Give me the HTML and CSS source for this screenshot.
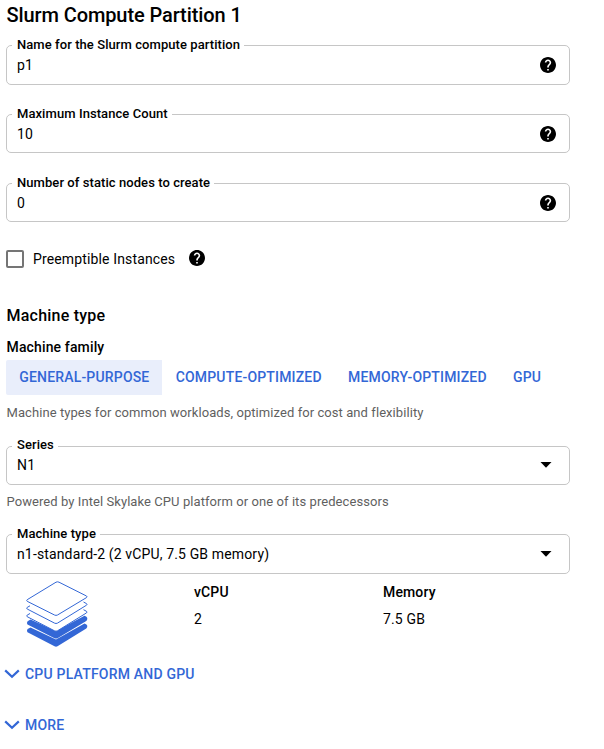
FILE: index.html
```html
<!DOCTYPE html>
<html lang="en">
<head>
<meta charset="utf-8">
<title>Slurm Compute Partition 1</title>
<link rel="stylesheet" href="styles.css">
</head>
<body>
<svg class="defs" width="0" height="0">
  <symbol id="help" viewBox="2 2 20 20"><path d="M12 2C6.48 2 2 6.48 2 12s4.48 10 10 10 10-4.48 10-10S17.52 2 12 2zm1 17h-2v-2h2v2zm2.07-7.75l-.9.92C13.45 12.9 13 13.5 13 15h-2v-.5c0-1.1.45-2.1 1.17-2.83l1.24-1.26c.37-.36.59-.86.59-1.41 0-1.1-.9-2-2-2s-2 .9-2 2H8c0-2.21 1.79-4 4-4s4 1.79 4 4c0 .88-.36 1.68-.93 2.25z"/></symbol>
  <symbol id="caret" viewBox="0 0 12 6"><path d="M.5 0h11L6 5.8z"/></symbol>
  <symbol id="chevron" viewBox="0 0 16 10"><path d="M1.2 1.4 8 7.8l6.8-6.4" fill="none" stroke="currentColor" stroke-width="2.2"/></symbol>
</svg>
<main class="form">
  <h1 class="title">Slurm Compute Partition 1</h1>

  <div class="field field-name tall">
    <label class="field-label">Name for the Slurm compute partition</label>
    <span class="value">p1</span><svg class="help"><use href="#help"/></svg>
  </div>
  <div class="field field-max">
    <label class="field-label">Maximum Instance Count</label>
    <span class="value">10</span><svg class="help"><use href="#help"/></svg>
  </div>
  <div class="field field-static">
    <label class="field-label">Number of static nodes to create</label>
    <span class="value">0</span><svg class="help"><use href="#help"/></svg>
  </div>

  <div class="check-row">
    <span class="checkbox"></span>
    <span class="check-label">Preemptible Instances</span>
    <svg class="help"><use href="#help"/></svg>
  </div>

  <h2 class="section">Machine type</h2>
  <h3 class="family">Machine family</h3>
  <nav class="tabs">
    <a class="tab active">GENERAL-PURPOSE</a>
    <a class="tab">COMPUTE-OPTIMIZED</a>
    <a class="tab">MEMORY-OPTIMIZED</a>
    <a class="tab">GPU</a>
  </nav>
  <p class="hint hint-family">Machine types for common workloads, optimized for cost and flexibility</p>

  <div class="field field-series">
    <label class="field-label">Series</label>
    <span class="value">N1</span><svg class="caret"><use href="#caret"/></svg>
  </div>
  <p class="hint hint-series">Powered by Intel Skylake CPU platform or one of its predecessors</p>

  <div class="field field-type tall">
    <label class="field-label">Machine type</label>
    <span class="value">n1-standard-2 (2 vCPU, 7.5 GB memory)</span><svg class="caret"><use href="#caret"/></svg>
  </div>

  <div class="specs">
    <svg class="stack" viewBox="0 0 64 68">
      <g class="solid">
        <path d="M5.500 47.500 2.600 49Q1.300 50.800 2.500 52.200L29.500 66.300Q31 67 32.500 66.300L61.300 48.600Q62.500 47.600 62.300 45.800 62 44.400 59.500 43.600L31 59.500z"/>
        <path d="M5.500 39.600 2.600 41.300Q1.300 43 2.500 44.500L29.500 58.200Q31 58.900 32.500 58.200L61.300 40.900Q62.500 39.900 62.300 38 62 36.600 59.500 35.700L31 51z"/>
      </g>
      <g class="outline">
        <path d="M5 33.500 2.200 35.100Q1.200 36 2.200 36.700L29.500 50.800Q31 51.600 32.500 50.800L61.500 32.900Q62.500 32 61.500 31.300L58.500 29.700"/>
        <path d="M5 25.800 2.200 27.400Q1.200 28.300 2.200 29L29.500 43.100Q31 43.900 32.500 43.100L61.500 25.200Q62.500 24.300 61.500 23.600L58.500 22"/>
        <path d="M31 2.200Q32.500 1.400 34 2.200L61.500 16Q62.500 16.800 61.500 17.600L32.500 35Q31 35.800 29.500 35L2.200 21.300Q1.200 20.500 2.200 19.700z"/>
      </g>
    </svg>
    <dl class="spec spec-cpu"><dt>vCPU</dt><dd>2</dd></dl>
    <dl class="spec"><dt>Memory</dt><dd>7.5 GB</dd></dl>
  </div>

  <a class="expander expander-cpu"><svg class="chevron"><use href="#chevron"/></svg>CPU PLATFORM AND GPU</a>
  <a class="expander"><svg class="chevron"><use href="#chevron"/></svg>MORE</a>
</main>
</body>
</html>
```
FILE: styles.css
```css
* { box-sizing: border-box; }
body {
  margin: 0;
  background: #fff;
  color: #000;
  font: 14px/20px Roboto, sans-serif;
  letter-spacing: 0.14px;
}
h1, h2, h3, p, dl, dd { margin: 0; }
.defs { display: block; }
.form {
  display: flow-root;
  width: 564px;
  margin-left: 6px;
}
.title {
  height: 30px;
  margin-bottom: 15px;
  padding-left: 0.5px;
  font-size: 20px;
  font-weight: 500;
  line-height: 30px;
  letter-spacing: -0.1px;
}
.field {
  position: relative;
  display: flex;
  align-items: center;
  justify-content: space-between;
  height: 39px;
  padding: 0 13px 0 10px;
  border: 1px solid #c6c6c6;
  border-radius: 5px;
}
.tall { height: 40px; }
.field-label {
  position: absolute;
  top: -9px;
  left: 5px;
  padding: 0 4px 0 5px;
  background: #fff;
  font-size: 13px;
  font-weight: 500;
  line-height: 16px;
  letter-spacing: 0.07px;
  white-space: nowrap;
}
.help { width: 16px; height: 16px; }
.field-name { margin-bottom: 29px; }
.field-max { margin-bottom: 30px; }
.field-series { padding-bottom: 2px; }
.field-series .field-label { top: -10px; }
.caret { width: 12px; height: 6px; margin-right: 4px; }

.check-row {
  display: flex;
  align-items: center;
  height: 18px;
  margin-top: 28px;
}
.checkbox {
  width: 18px;
  height: 18px;
  border: 2px solid #757575;
  border-radius: 2px;
}
.check-label { margin: 0 14px 0 9px; }
.check-row .help { margin-bottom: 3px; }

.section {
  margin-top: 36px;
  padding-left: 0.5px;
  font-size: 16px;
  font-weight: 500;
  line-height: 24px;
  letter-spacing: 0.22px;
}
.family {
  margin: 9px 0 3px;
  padding-left: 0.5px;
  font-size: 14px;
  font-weight: 500;
  line-height: 20px;
}
.tabs { display: flex; height: 35px; }
.tab {
  padding: 0 13px 0 13.3px;
  color: #3367d6;
  font-weight: 500;
  line-height: 34px;
  letter-spacing: 0.17px;
  white-space: nowrap;
}
.active { background: #e9eefb; border-radius: 2px 0 0 2px; }
.hint {
  padding-left: 0.5px;
  color: #5f5f5f;
  font-size: 13px;
  line-height: 18px;
  letter-spacing: 0.07px;
}
.hint-family { margin: 9px 0 24px; }
.hint-series { margin: 8px 0 23px; }

.specs { display: flex; height: 76px; padding: 6px 0 0 19px; }
.stack { width: 64px; height: 68px; }
.solid { fill: #3367d6; }
.outline { fill: #fff; stroke: #3367d6; stroke-width: 1; }
.spec { margin-top: 2px; }
.spec-cpu { width: 189px; margin-left: 105px; }
.spec dt { font-weight: 500; }
.spec dd { margin-top: 7px; }

.expander {
  display: flex;
  align-items: center;
  gap: 5px;
  height: 20px;
  margin-left: -2px;
  color: #3367d6;
  font-weight: 500;
  letter-spacing: 0.2px;
}
.expander-cpu { margin: 14px 0 31px -2px; }
.chevron { width: 16px; height: 10px; }
```
